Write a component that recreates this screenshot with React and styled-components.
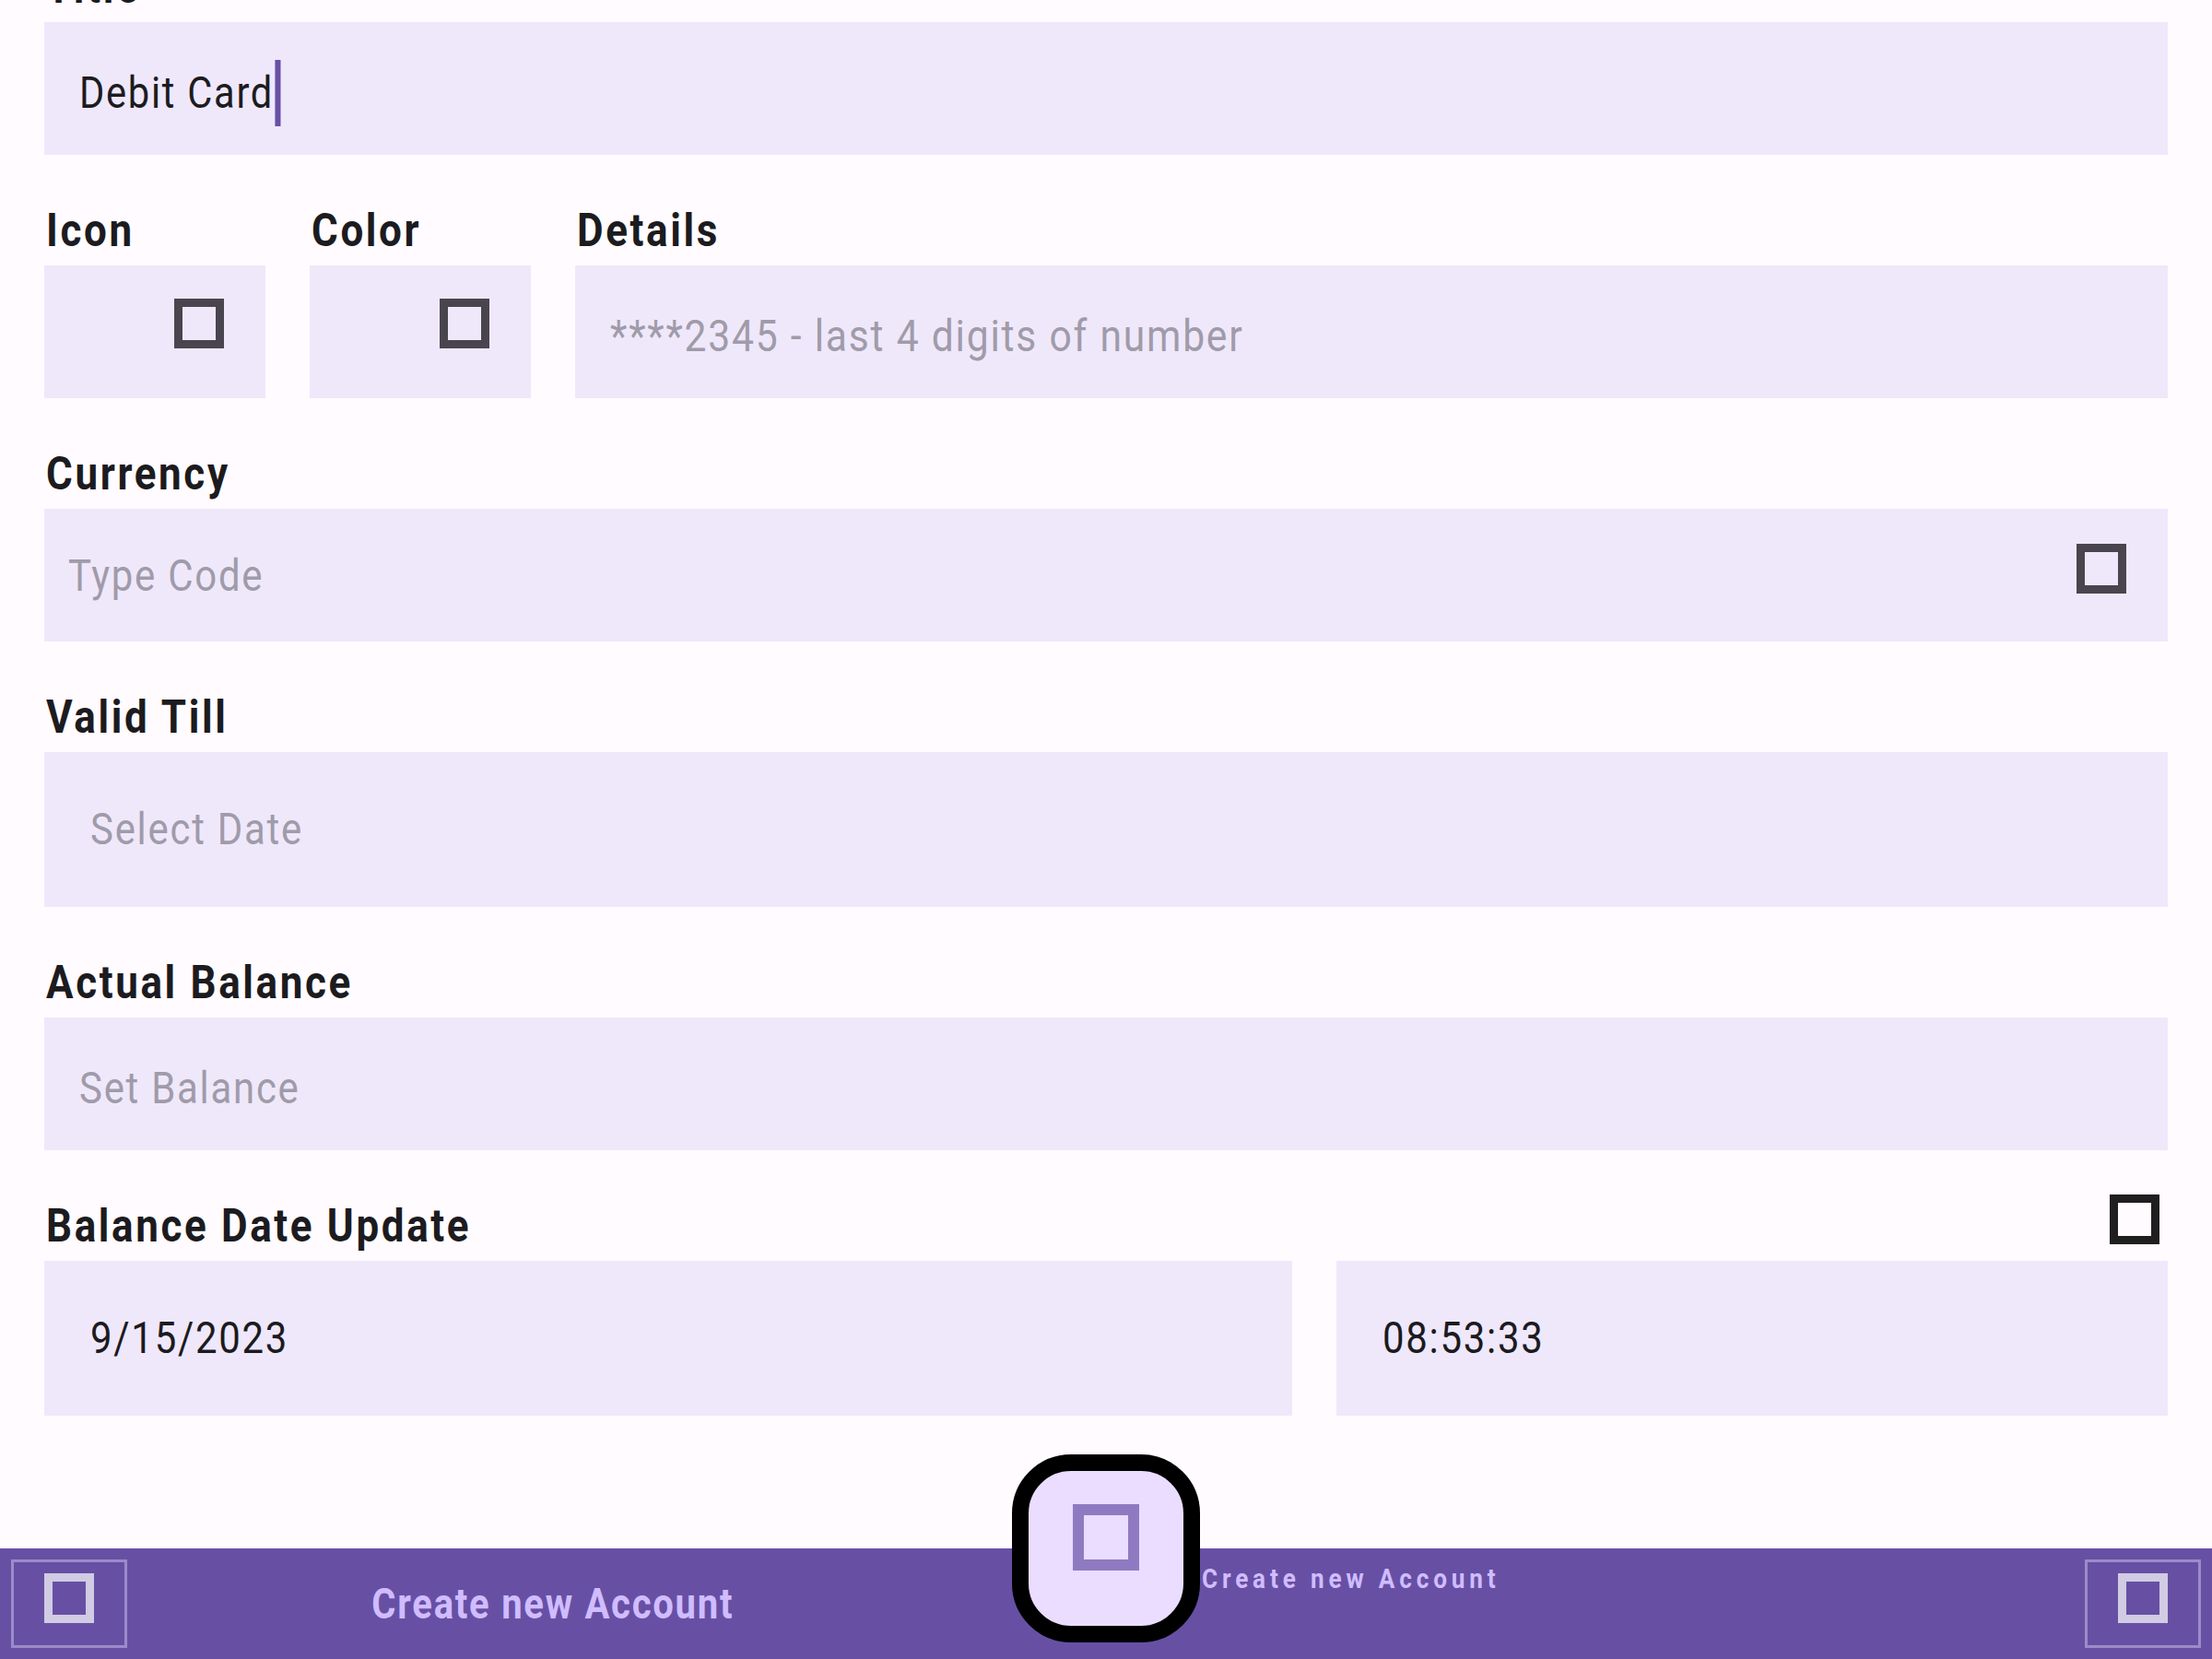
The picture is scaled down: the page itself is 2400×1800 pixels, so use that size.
import React from "react";
import styled, { createGlobalStyle } from "styled-components";

const GlobalStyle = createGlobalStyle`
  html, body {
    margin: 0;
    padding: 0;
    background: #FFFBFE;
    overflow: hidden;
  }
  body {
    font-family: Roboto, "Noto Sans", "Liberation Sans", sans-serif;
    color: #1C1B1F;
  }
`;

const Page = styled.div`
  width: 2400px;
  height: 1800px;
  display: flex;
  flex-direction: column;
  background: #FFFBFE;
`;

const Content = styled.main`
  flex: 1;
  overflow: hidden;
  padding: 0 48px;
`;

const Form = styled.div`
  display: flex;
  flex-direction: column;
  gap: 54px;
  margin-top: -42px;
`;

const Field = styled.div`
  display: flex;
  flex-direction: column;
  min-width: 0;
`;

const Squeeze = styled.span`
  display: inline-flex;
  align-items: center;
  white-space: pre;
  transform: scaleX(${(p) => p.$scale || 0.87});
  transform-origin: ${(p) => (p.$center ? "center" : "left")} center;
`;

const Label = styled.div`
  height: 56px;
  line-height: 56px;
  margin-bottom: 10px;
  padding-left: 2px;
  font-size: 50px;
  font-weight: 700;
  letter-spacing: 3px;
  color: #1C1B1F;
  white-space: nowrap;
`;

const LabelRow = styled.div`
  display: flex;
  justify-content: space-between;
  align-items: flex-start;
`;

const InputBox = styled.div`
  height: ${(p) => (p.$tall ? 168 : 144)}px;
  background: #EFE8FB;
  display: flex;
  align-items: center;
  padding-left: ${(p) => p.$pad ?? 40}px;
  padding-top: ${(p) => p.$shift ?? 0}px;
  box-sizing: border-box;
  min-width: 0;
`;

const Value = styled.span`
  font-size: 48px;
  font-weight: 400;
  letter-spacing: 2px;
  line-height: 56px;
  color: ${(p) => (p.$placeholder ? "#A09BA9" : "#1C1B1F")};
`;

const Cursor = styled.span`
  display: inline-block;
  width: 7px;
  height: 72px;
  margin-left: 2px;
  background: #6750A4;
`;

const Tofu = styled.span`
  display: inline-block;
  flex: none;
  width: ${(p) => p.$size || 54}px;
  height: ${(p) => p.$size || 54}px;
  box-sizing: border-box;
  border: ${(p) => p.$stroke || 9}px solid ${(p) => p.$color || "#49454F"};
`;

const Trailing = styled(Tofu)`
  align-self: flex-start;
  margin-top: 36px;
  margin-left: auto;
  margin-right: 45px;
`;

const HeaderGlyph = styled(Tofu)`
  margin-top: -6px;
  margin-right: 9px;
`;

const TripleRow = styled.div`
  display: grid;
  grid-template-columns: 240px 240px 1fr;
  column-gap: 48px;
`;

const DateRow = styled.div`
  display: grid;
  grid-template-columns: 3fr 2fr;
  column-gap: 48px;
`;

const Bar = styled.footer`
  position: relative;
  height: 120px;
  flex: none;
  background: #6750A4;
  display: flex;
  align-items: center;
  padding: 0 12px;
  box-sizing: border-box;
`;

const BarButton = styled.div`
  width: 126px;
  height: 96px;
  flex: none;
  box-sizing: border-box;
  border: 3px solid #9C8BC9;
  padding-bottom: 12px;
  display: flex;
  align-items: center;
  justify-content: center;
`;

const BarTitle = styled.div`
  flex: 0 0 924px;
  display: flex;
  justify-content: center;
  font-size: 46px;
  font-weight: 700;
  letter-spacing: 2px;
  color: #D0BCFF;
  line-height: 56px;
`;

const Spacer = styled.div`
  flex: 1;
`;

const FabWrap = styled.div`
  position: absolute;
  left: calc(50% - 102px);
  top: -102px;
  display: flex;
  align-items: flex-start;
`;

const Fab = styled.div`
  width: 204px;
  height: 204px;
  box-sizing: border-box;
  border: 18px solid #000;
  border-radius: 64px;
  background: #EADDFF;
  display: flex;
  align-items: center;
  justify-content: center;
  padding-bottom: 24px;
`;

const FabLabel = styled.div`
  margin-top: 117px;
  margin-left: 2px;
  font-size: 30px;
  font-weight: 700;
  letter-spacing: 5.6px;
  line-height: 36px;
  color: #D0BCFF;
`;

function FieldLabel({ children }) {
  return (
    <Label>
      <Squeeze $scale={0.879}>{children}</Squeeze>
    </Label>
  );
}

function Text({ children, placeholder, cursor, scale }) {
  return (
    <Value $placeholder={placeholder}>
      <Squeeze $scale={scale || 0.873}>
        {children}
        {cursor && <Cursor />}
      </Squeeze>
    </Value>
  );
}

export default function App() {
  return (
    <Page>
      <GlobalStyle />
      <Content>
        <Form>
          <Field>
            <FieldLabel>Title</FieldLabel>
            <InputBox $pad={38} $shift={9}>
              <Text cursor scale={0.867}>Debit Card</Text>
            </InputBox>
          </Field>

          <TripleRow>
            <Field>
              <FieldLabel>Icon</FieldLabel>
              <InputBox>
                <Trailing />
              </InputBox>
            </Field>
            <Field>
              <FieldLabel>Color</FieldLabel>
              <InputBox>
                <Trailing />
              </InputBox>
            </Field>
            <Field>
              <FieldLabel>Details</FieldLabel>
              <InputBox $pad={38} $shift={9}>
                <Text placeholder scale={0.888}>****2345 - last 4 digits of number</Text>
              </InputBox>
            </Field>
          </TripleRow>

          <Field>
            <FieldLabel>Currency</FieldLabel>
            <InputBox $pad={26} $shift={2}>
              <Text placeholder>Type Code</Text>
              <Trailing />
            </InputBox>
          </Field>

          <Field>
            <FieldLabel>Valid Till</FieldLabel>
            <InputBox $tall $pad={50}>
              <Text placeholder>Select Date</Text>
            </InputBox>
          </Field>

          <Field>
            <FieldLabel>Actual Balance</FieldLabel>
            <InputBox $pad={38} $shift={9}>
              <Text placeholder>Set Balance</Text>
            </InputBox>
          </Field>

          <Field>
            <LabelRow>
              <FieldLabel>Balance Date Update</FieldLabel>
              <HeaderGlyph $color="#1F1F1F" />
            </LabelRow>
            <DateRow>
              <InputBox $tall $pad={50}>
                <Text>9/15/2023</Text>
              </InputBox>
              <InputBox $tall $pad={50}>
                <Text>08:53:33</Text>
              </InputBox>
            </DateRow>
          </Field>
        </Form>
      </Content>

      <Bar>
        <BarButton>
          <Tofu $color="#D1CBE3" />
        </BarButton>
        <BarTitle>
          <Squeeze $center>Create new Account</Squeeze>
        </BarTitle>
        <Spacer />
        <BarButton>
          <Tofu $color="#D1CBE3" />
        </BarButton>
        <FabWrap>
          <Fab>
            <Tofu $size={72} $stroke={12} $color="#8F7AC1" />
          </Fab>
          <FabLabel>
            <Squeeze>Create new Account</Squeeze>
          </FabLabel>
        </FabWrap>
      </Bar>
    </Page>
  );
}
